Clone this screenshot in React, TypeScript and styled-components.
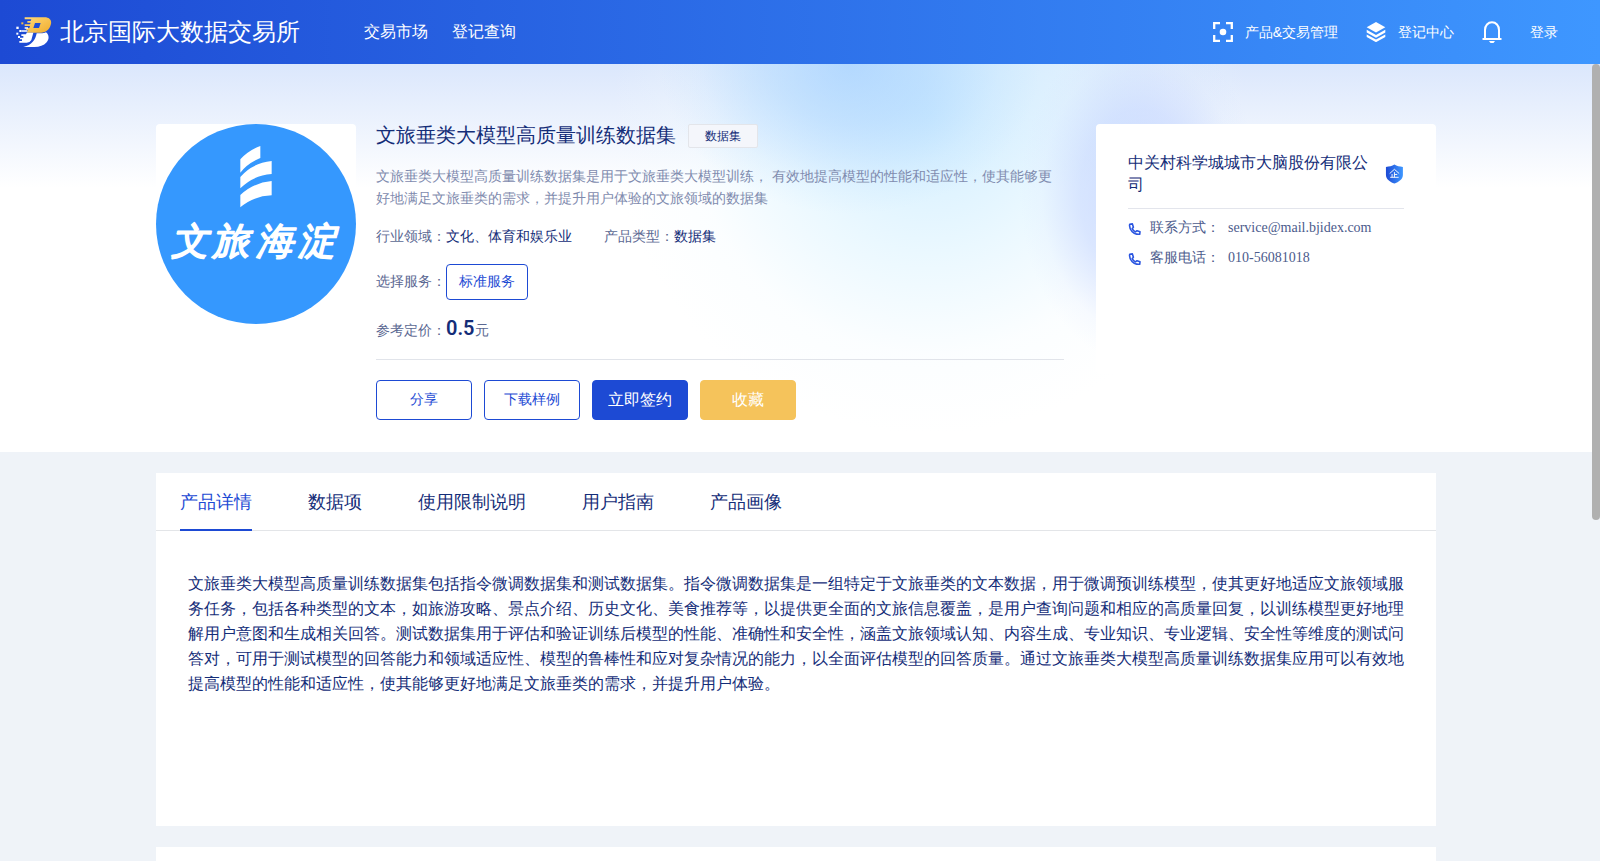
import React from "react";
import styled, { createGlobalStyle, css } from "styled-components";

const navy = "#142d78";
const blue = "#1d4ad4";

const GlobalStyle = createGlobalStyle`
  *, *::before, *::after { box-sizing: border-box; }
  body {
    margin: 0;
    font-family: "Liberation Serif", serif;
    font-size: 14px;
    color: ${navy};
    background: #eff3f8;
  }
  h1, h2, p, dl, dd, dt, ul { margin: 0; padding: 0; font-weight: 400; }
  a { color: inherit; text-decoration: none; }
  button { font-family: inherit; cursor: pointer; }
`;

const Page = styled.div`
  display: flex;
  flex-direction: column;
  height: 100vh;
`;

const Header = styled.header`
  display: flex;
  align-items: center;
  flex: none;
  height: 64px;
  padding: 0 42px 0 16px;
  color: #fff;
  background: linear-gradient(90deg, #1d4ad4, #3e97ff);
`;

const Brand = styled.a`
  display: flex;
  align-items: center;
  gap: 8px;
  font-size: 24px;
  line-height: 32px;
`;

const MainNav = styled.nav`
  display: flex;
  gap: 24px;
  margin-left: 64px;
  font-size: 16px;
  line-height: 24px;
`;

const UserNav = styled.nav`
  display: flex;
  align-items: center;
  gap: 28px;
  margin-left: auto;
  font-family: "Liberation Sans", sans-serif;
  font-size: 14px;
  line-height: 20px;
`;

const UserLink = styled.a`
  display: flex;
  align-items: center;
  gap: 12px;
`;

const BellButton = styled.button`
  display: flex;
  padding: 0;
  border: 0;
  color: inherit;
  background: none;
`;

const Viewport = styled.div`
  position: relative;
  flex: 1;
  min-height: 0;
`;

const Scroller = styled.main`
  height: 100%;
  overflow-y: auto;
  scrollbar-width: none;
`;

const ScrollThumb = styled.div`
  position: absolute;
  top: 0;
  right: 0;
  width: 8px;
  border-radius: 4px;
  background: #b0b0b0;
`;

const Hero = styled.section`
  padding: 60px 8px 32px 0;
  background:
    radial-gradient(ellipse 190px 150px at 850px 0, rgba(160, 205, 255, 0.65), rgba(160, 205, 255, 0.42) 40%, rgba(170, 212, 255, 0.12) 78%, rgba(180, 215, 255, 0)),
    radial-gradient(ellipse 120px 170px at 1140px 130px, rgba(190, 208, 255, 0.75), rgba(195, 212, 255, 0.55) 50%, rgba(205, 220, 255, 0.12) 82%, rgba(210, 225, 255, 0)),
    radial-gradient(ellipse 320px 320px at 930px 50px, rgba(205, 236, 255, 0.9), rgba(222, 244, 255, 0.6) 45%, rgba(240, 250, 255, 0.25) 75%, rgba(255, 255, 255, 0)),
    linear-gradient(180deg, #dbe7fc, #fff 124px);
`;

const Sections = styled.div`
  padding-right: 8px;
`;

const Container = styled.div`
  width: 1280px;
  max-width: 100%;
  margin: 0 auto;
`;

const HeroGrid = styled(Container)`
  display: grid;
  grid-template-columns: 200px minmax(0, 1fr) 340px;
  align-items: start;
`;

const Cover = styled.div`
  height: 200px;
  border-radius: 4px;
  background: #fff;
`;

const Info = styled.div`
  margin: 0 32px 0 20px;
`;

const TitleRow = styled.div`
  display: flex;
  align-items: flex-start;
  gap: 12px;
`;

const Title = styled.h1`
  font-size: 20px;
  line-height: 22px;
`;

const Badge = styled.span`
  padding: 0 16px;
  border: 1px solid #e3e5ea;
  border-radius: 2px;
  background: #f4f6fb;
  font-size: 12px;
  line-height: 22px;
`;

const Summary = styled.p`
  margin-top: 18px;
  color: #7f8bae;
  line-height: 22px;
`;

const Facts = styled.dl`
  display: flex;
  align-items: center;
  gap: 32px;
  margin-top: 16px;
  line-height: 22px;
`;

const Fact = styled.div`
  display: flex;
  align-items: center;
  dt { color: #5b6892; }
`;

const outlined = css`
  border: 1px solid ${blue};
  border-radius: 4px;
  color: ${blue};
  background: #fff;
  font-size: 14px;
`;

const ServiceOption = styled.button`
  ${outlined}
  height: 36px;
  padding: 0 12px;
`;

const PriceFact = styled(Fact)`
  align-items: baseline;
  padding-top: 1px;
`;

const Price = styled.dd`
  color: #5b6892;
  strong {
    font-family: Roboto, sans-serif;
    font-size: 20px;
    font-weight: 600;
    color: ${navy};
  }
`;

const Actions = styled.div`
  display: flex;
  gap: 12px;
  margin-top: 17px;
  padding-top: 20px;
  border-top: 1px solid #e1e4ea;
`;

const ActionButton = styled.button<{ $tone?: "primary" | "gold" }>`
  ${outlined}
  width: 96px;
  height: 40px;
  padding: 0;
  ${({ $tone }) =>
    $tone &&
    css`
      border-color: ${$tone === "gold" ? "#f5c35b" : blue};
      color: #fff;
      background: ${$tone === "gold" ? "#f5c35b" : blue};
      font-size: 16px;
    `}
`;

const Provider = styled.aside`
  min-height: 250px;
  padding: 28px 32px;
  border-radius: 4px;
  background: #fff;
`;

const ProviderHead = styled.div`
  display: flex;
  align-items: center;
  justify-content: space-between;
  gap: 16px;
  padding-bottom: 12px;
  margin-bottom: 4px;
  border-bottom: 1px solid #e3e5ec;
`;

const ProviderName = styled.h2`
  font-size: 16px;
  line-height: 22px;
`;

const Contact = styled.div`
  display: flex;
  align-items: center;
  color: #4c5b8c;
  line-height: 30px;
  svg { margin-right: 8px; }
  dt { margin-right: 8px; }
`;

const Panel = styled(Container)`
  min-height: 353px;
  margin-top: 21px;
  background: #fff;
`;

const RelatedPanel = styled(Panel)`
  min-height: 590px;
  margin-bottom: 20px;
`;

const TabList = styled.div`
  display: flex;
  gap: 56px;
  height: 58px;
  padding: 0 24px;
  border-bottom: 1px solid #e3e5e8;
`;

const Tab = styled.button<{ $active?: boolean }>`
  height: 58px;
  padding: 2px 0 0;
  border: 0;
  border-bottom: 2px solid ${({ $active }) => ($active ? blue : "transparent")};
  color: ${({ $active }) => ($active ? blue : navy)};
  background: none;
  font-size: 18px;
`;

const Detail = styled.p`
  padding: 40px 32px;
  font-size: 16px;
  line-height: 25px;
`;

const BrandMark = () => (
  <svg width="36" height="30" viewBox="18 19 108 90" aria-hidden="true">
    <defs>
      <linearGradient id="gold" x1="0" x2="1" y1="0" y2="1">
        <stop offset="0" stopColor="#ffd978" />
        <stop offset="1" stopColor="#f0ac2c" />
      </linearGradient>
    </defs>
    <path
      fill="url(#gold)"
      fillRule="evenodd"
      d="M44 20H104C119 20 127 30 122 43C118 57 107 66 93 66H50L54 58H48L50 52H58L60 46H44V41H60L62 36H52V31H62L64 26H44ZM75 37L70 52H87L92 37Z"
    />
    <path fill="#fff" d="M50 66H70L64 88Q60 96 50 96H28V91H36V86H30V81H40V76H34V71H48Z" />
    <path fill="#fff" d="M92 68C99 68 104 67 108 65C118 73 118 86 110 95C101 105 89 109 73 109H40C66 103 76 88 80 68Z" />
    <path stroke="#fff" strokeWidth="5" d="M34 61H52M44 52H54" />
    <g fill="#fff">
      <rect x="19" y="48" width="7" height="7" />
      <rect x="28" y="58" width="6" height="6" />
      <rect x="19" y="66" width="6" height="6" />
      <rect x="24" y="76" width="6" height="6" />
    </g>
    <rect x="34" y="35" width="6" height="6" fill="#f5bd4a" />
  </svg>
);

const ScanIcon = () => (
  <svg width="20" height="20" viewBox="0 0 20 20" fill="none" stroke="#fff" strokeWidth="2.300" aria-hidden="true">
    <path d="M1.200 7V1.200H7M13 1.200H18.800V7M18.800 13V18.800H13M7 18.800H1.200V13" />
    <circle cx="10" cy="10" r="3.300" fill="#fff" stroke="none" />
  </svg>
);

const LayersIcon = () => (
  <svg width="20" height="20" viewBox="0 0 20 20" fill="#fff" aria-hidden="true">
    <path d="M10 0L19.300 5.300L10 10.500L.7 5.300Z" />
    <path d="M.7 7.800L10 13L19.300 7.800V10.600L10 15.800L.7 10.600Z" />
    <path d="M.7 12.400L10 17.600L19.300 12.400V15L10 20.200L.7 15Z" />
  </svg>
);

const BellIcon = () => (
  <svg width="20" height="22" viewBox="0 0 20 22" fill="none" stroke="#fff" strokeWidth="2" aria-hidden="true">
    <path d="M3 17V9C3 4.500 6 1.300 10 1.300S17 4.500 17 9V17M.5 18H19.500" />
    <path d="M7 20H13L11.500 22H8.500Z" fill="#fff" stroke="none" />
  </svg>
);

const PhoneIcon = () => (
  <svg width="14" height="14" viewBox="0 0 14 14" fill="none" stroke="#2a55e0" strokeWidth="1.600" strokeLinejoin="round" aria-hidden="true">
    <path d="M1.700 3.300C.7 9 6 14.100 11.700 13.300L12 10.700L9 9.700L7.500 10.900C5.900 10.100 4.900 9.100 4.200 7.600L5.400 6.300L4.400 2.900Z" />
  </svg>
);

const ShieldIcon = () => (
  <svg width="20" height="20" viewBox="0 0 20 20" role="img" aria-label="企业认证">
    <defs>
      <linearGradient id="shield" x1="0" x2="1" y1="0" y2="0">
        <stop offset="0" stopColor="#1d4ad4" />
        <stop offset="1" stopColor="#3e97ff" />
      </linearGradient>
    </defs>
    <path fill="url(#shield)" d="M10 0C12.500 1.500 15.500 2.300 19 2.500V11C19 15.500 14.500 18.500 10 20C5.500 18.500 1 15.500 1 11V2.500C4.500 2.300 7.500 1.500 10 0Z" />
    <path fill="none" stroke="#fff" strokeWidth="1" d="M5 9.500L10 5L15 9.500M10 8V13.500M10 10.500H13M7.500 10V13.500M5.500 13.500H14.500" />
  </svg>
);

const CoverArt = () => (
  <svg width="200" height="200" viewBox="18 27 600 600" role="img" aria-label="文旅海淀">
    <circle cx="318" cy="327" r="300" fill="#3598fe" />
    <g fill="#fff">
      <path d="M271 133Q296 106 331 93V129Q292 145 271 173Z" />
      <path d="M271 186Q305 145 365 138V177Q310 181 271 220Z" />
      <path d="M271 240Q310 203 365 198V241Q310 243 271 277Z" />
    </g>
    <text
      x="64 186 318 444"
      y="417"
      fill="#fff"
      stroke="#fff"
      strokeWidth="5"
      strokeLinejoin="round"
      fontFamily="Liberation Serif, serif"
      fontSize="112"
      fontStyle="italic"
    >
      文旅海淀
    </text>
  </svg>
);

const tabs = ["产品详情", "数据项", "使用限制说明", "用户指南", "产品画像"];

const contacts = [
  { label: "联系方式：", value: "service@mail.bjidex.com" },
  { label: "客服电话：", value: "010-56081018" },
];

export default function App() {
  const [active, setActive] = React.useState(0);
  const [thumb, setThumb] = React.useState({ size: 0, offset: 0 });
  const scroller = React.useRef<HTMLElement>(null);

  const measure = React.useCallback(() => {
    const el = scroller.current;
    if (!el) return;
    const ratio = el.clientHeight / el.scrollHeight;
    setThumb({ size: el.clientHeight * ratio, offset: el.scrollTop * ratio });
  }, []);

  React.useLayoutEffect(() => {
    measure();
    window.addEventListener("resize", measure);
    return () => window.removeEventListener("resize", measure);
  }, [measure]);

  return (
    <Page>
      <GlobalStyle />
      <Header>
        <Brand href="#">
          <BrandMark />
          北京国际大数据交易所
        </Brand>
        <MainNav>
          <a href="#market">交易市场</a>
          <a href="#query">登记查询</a>
        </MainNav>
        <UserNav>
          <UserLink href="#manage">
            <ScanIcon />
            产品&amp;交易管理
          </UserLink>
          <UserLink href="#register">
            <LayersIcon />
            登记中心
          </UserLink>
          <BellButton type="button" aria-label="消息">
            <BellIcon />
          </BellButton>
          <UserLink href="#login">登录</UserLink>
        </UserNav>
      </Header>

      <Viewport>
        <Scroller ref={scroller} onScroll={measure}>
          <Hero>
            <HeroGrid>
              <Cover>
                <CoverArt />
              </Cover>
              <Info>
                <TitleRow>
                  <Title>文旅垂类大模型高质量训练数据集</Title>
                  <Badge>数据集</Badge>
                </TitleRow>
                <Summary>
                  文旅垂类大模型高质量训练数据集是用于文旅垂类大模型训练， 有效地提高模型的性能和适应性，使其能够更好地满足文旅垂类的需求，并提升用户体验的文旅领域的数据集
                </Summary>
                <Facts>
                  <Fact>
                    <dt>行业领域：</dt>
                    <dd>文化、体育和娱乐业</dd>
                  </Fact>
                  <Fact>
                    <dt>产品类型：</dt>
                    <dd>数据集</dd>
                  </Fact>
                </Facts>
                <Facts>
                  <Fact>
                    <dt>选择服务：</dt>
                    <dd>
                      <ServiceOption type="button">标准服务</ServiceOption>
                    </dd>
                  </Fact>
                </Facts>
                <Facts>
                  <PriceFact>
                    <dt>参考定价：</dt>
                    <Price>
                      <strong>0.5</strong>元
                    </Price>
                  </PriceFact>
                </Facts>
                <Actions>
                  <ActionButton type="button">分享</ActionButton>
                  <ActionButton type="button">下载样例</ActionButton>
                  <ActionButton type="button" $tone="primary">立即签约</ActionButton>
                  <ActionButton type="button" $tone="gold">收藏</ActionButton>
                </Actions>
              </Info>
              <Provider>
                <ProviderHead>
                  <ProviderName>中关村科学城城市大脑股份有限公司</ProviderName>
                  <ShieldIcon />
                </ProviderHead>
                <dl>
                  {contacts.map(({ label, value }) => (
                    <Contact key={label}>
                      <PhoneIcon />
                      <dt>{label}</dt>
                      <dd>{value}</dd>
                    </Contact>
                  ))}
                </dl>
              </Provider>
            </HeroGrid>
          </Hero>

          <Sections>
            <Panel>
              <TabList role="tablist">
                {tabs.map((name, index) => (
                  <Tab
                    key={name}
                    type="button"
                    role="tab"
                    aria-selected={index === active}
                    $active={index === active}
                    onClick={() => setActive(index)}
                  >
                    {name}
                  </Tab>
                ))}
              </TabList>
              <Detail>
                文旅垂类大模型高质量训练数据集包括指令微调数据集和测试数据集。指令微调数据集是一组特定于文旅垂类的文本数据，用于微调预训练模型，使其更好地适应文旅领域服务任务，包括各种类型的文本，如旅游攻略、景点介绍、历史文化、美食推荐等，以提供更全面的文旅信息覆盖，是用户查询问题和相应的高质量回复，以训练模型更好地理解用户意图和生成相关回答。测试数据集用于评估和验证训练后模型的性能、准确性和安全性，涵盖文旅领域认知、内容生成、专业知识、专业逻辑、安全性等维度的测试问答对，可用于测试模型的回答能力和领域适应性、模型的鲁棒性和应对复杂情况的能力，以全面评估模型的回答质量。通过文旅垂类大模型高质量训练数据集应用可以有效地提高模型的性能和适应性，使其能够更好地满足文旅垂类的需求，并提升用户体验。
              </Detail>
            </Panel>
            <RelatedPanel />
          </Sections>
        </Scroller>
        <ScrollThumb style={{ height: thumb.size, transform: `translateY(${thumb.offset}px)` }} />
      </Viewport>
    </Page>
  );
}
